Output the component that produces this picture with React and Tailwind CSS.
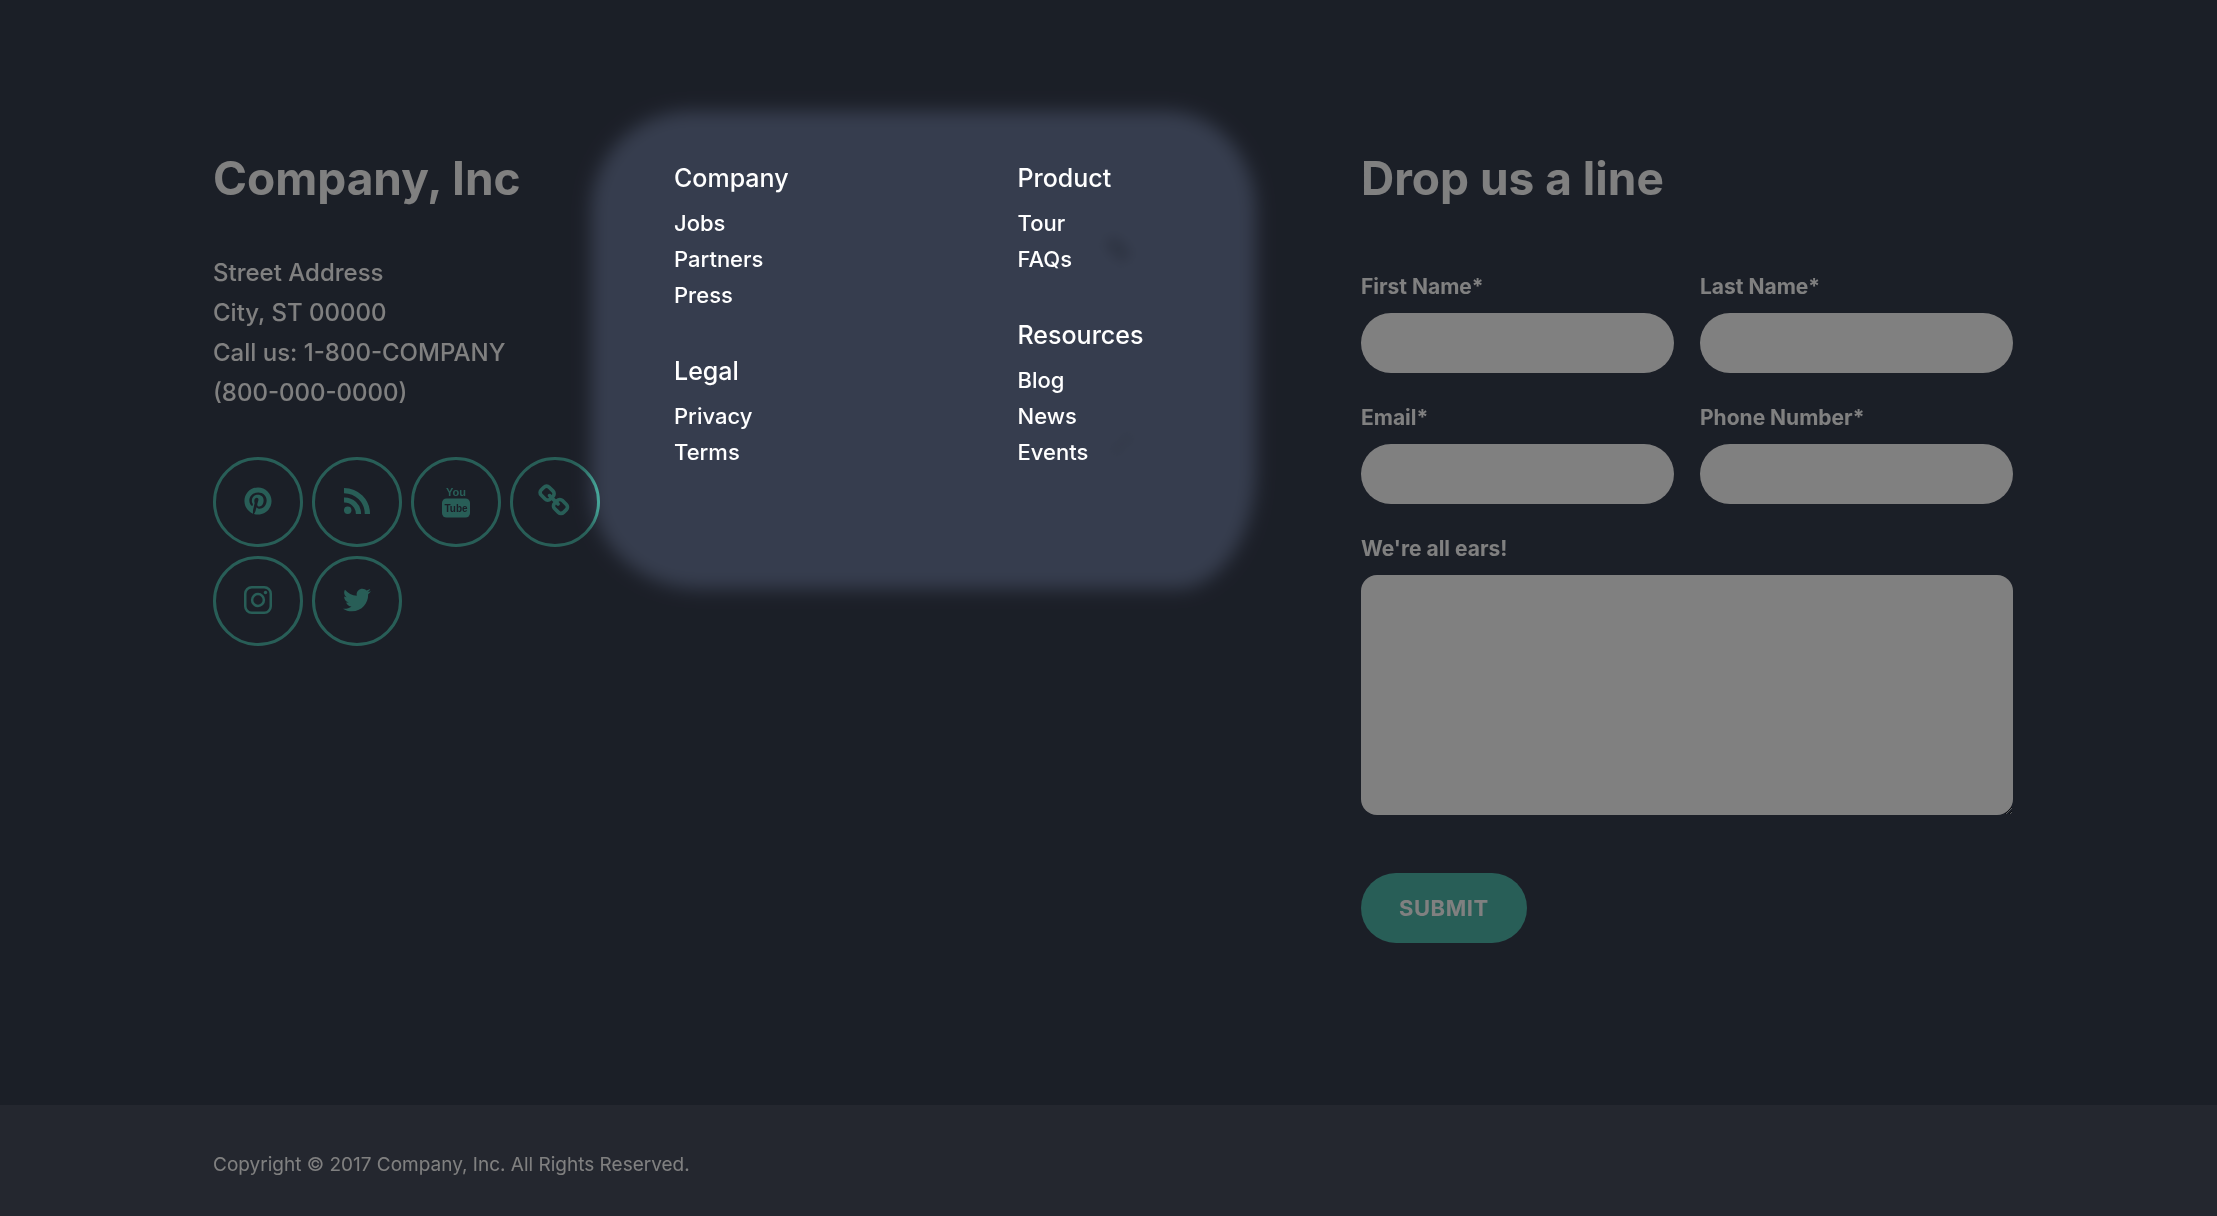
import React from 'react';
import { FaPinterest, FaTwitter } from 'react-icons/fa';

const linkColumns = [
  [
    { title: 'Company', links: ['Jobs', 'Partners', 'Press'] },
    { title: 'Legal', links: ['Privacy', 'Terms'] },
  ],
  [
    { title: 'Product', links: ['Tour', 'FAQs'] },
    { title: 'Resources', links: ['Blog', 'News', 'Events'] },
  ],
];

const fields = [
  { id: 'firstName', label: 'First Name*', type: 'text' },
  { id: 'lastName', label: 'Last Name*', type: 'text' },
  { id: 'email', label: 'Email*', type: 'email' },
  { id: 'phone', label: 'Phone Number*', type: 'tel' },
];

const RssIcon = () => (
  <svg viewBox="0 0 26 26" className="h-[26px] w-[26px]" fill="none" stroke="currentColor" strokeWidth="5.2">
    <circle cx="3.7" cy="22.3" r="3.7" fill="currentColor" stroke="none" />
    <path d="M0 12A14 14 0 0 1 14.5 26" />
    <path d="M0 2.6A23.4 23.4 0 0 1 23.4 26" />
  </svg>
);

const YoutubeIcon = () => (
  <svg viewBox="0 0 28 34" className="h-[34px] w-7 font-['Liberation_Sans',sans-serif] font-bold" fill="currentColor" textAnchor="middle">
    <text x="14" y="12" fontSize="11">You</text>
    <rect x="0" y="14.5" width="28" height="19" rx="4.5" />
    <text x="14" y="28" fontSize="10" className="fill-[#363d4e]">Tube</text>
  </svg>
);

const LinkIcon = () => (
  <svg viewBox="0 0 1792 1792" className="h-[34px] w-[34px]" fill="currentColor">
    <path d="M1456 1216q0-40-28-68l-208-208q-28-28-68-28-42 0-72 32 3 3 19 18.5t21.5 21.5 15 19 13 25.5 3.5 27.5q0 40-28 68t-68 28q-15 0-27.5-3.5t-25.5-13-19-15-21.5-21.5-18.5-19q-33 31-33 73 0 40 28 68l206 207q27 27 68 27 40 0 68-26l147-146q28-28 28-67zm-703-705q0-40-28-68l-206-207q-28-28-68-28-39 0-68 27l-147 146q-28 28-28 67 0 40 28 68l208 208q27 27 68 27 42 0 72-31-3-3-19-18.5t-21.5-21.5-15-19-13-25.5-3.5-27.5q0-40 28-68t68-28q15 0 27.5 3.5t25.5 13 19 15 21.5 21.5 18.5 19q33-31 33-73zm895 705q0 120-85 203l-147 146q-83 83-203 83-121 0-204-85l-206-207q-83-83-83-203 0-123 88-209l-88-88q-86 88-208 88-120 0-204-84l-208-208q-84-84-84-204t85-203l147-146q83-83 203-83 121 0 204 85l206 207q83 83 83 203 0 123-88 209l88 88q86-88 208-88 120 0 204 84l208 208q84 84 84 204z" />
  </svg>
);

const InstagramIcon = () => (
  <svg viewBox="0 0 28 28" className="h-7 w-7" fill="none" stroke="currentColor" strokeWidth="2.5">
    <rect x="1.25" y="1.25" width="25.5" height="25.5" rx="6.5" />
    <circle cx="14" cy="14" r="5.9" />
    <circle cx="21.5" cy="6.5" r="1.7" fill="currentColor" stroke="none" />
  </svg>
);

const socials = [
  { name: 'Pinterest', icon: <FaPinterest className="h-7 w-7" /> },
  { name: 'RSS', icon: <RssIcon /> },
  { name: 'YouTube', icon: <YoutubeIcon /> },
  { name: 'Website', icon: <LinkIcon /> },
  { name: 'Instagram', icon: <InstagramIcon /> },
  { name: 'Twitter', icon: <FaTwitter className="h-7 w-7" /> },
];

const Contact = () => (
  <div>
    <h2 className="text-[46px] leading-14 font-bold">Company, Inc</h2>
    <address className="mt-[47px] text-2xl leading-10 font-medium not-italic">
      Street Address
      <br />
      City, ST 00000
      <br />
      Call us: 1-800-COMPANY
      <br />
      (800-000-0000)
    </address>
    <ul className="mt-11 flex flex-wrap gap-[9px] text-[#50bcae]">
      {socials.map(({ name, icon }) => (
        <li key={name}>
          <a
            href="#"
            aria-label={name}
            className="flex h-[90px] w-[90px] items-center justify-center rounded-full border-3 border-[#50bcae] pb-0.5"
          >
            {icon}
          </a>
        </li>
      ))}
    </ul>
  </div>
);

const FooterNav = () => (
  <nav className="grid grid-cols-2 pt-[10px] leading-9 font-medium">
    {linkColumns.map((groups, i) => (
      <div key={i} className="flex flex-col gap-10">
        {groups.map(({ title, links }) => (
          <div key={title}>
            <h3 className="mb-[9px] text-[25px] leading-9">{title}</h3>
            <ul className="text-[22px] leading-9">
              {links.map((link) => (
                <li key={link}>
                  <a href="#">{link}</a>
                </li>
              ))}
            </ul>
          </div>
        ))}
      </div>
    ))}
  </nav>
);

const ContactForm = () => (
  <form onSubmit={(e) => e.preventDefault()}>
    <h2 className="text-[46px] leading-14 font-bold">Drop us a line</h2>
    <div className="mt-[67px] grid grid-cols-2 gap-x-[26px] gap-y-[31px] text-[21px] leading-7">
      {fields.map(({ id, label, type }) => (
        <div key={id}>
          <label htmlFor={id} className="mb-3 block font-bold">
            {label}
          </label>
          <input id={id} name={id} type={type} className="block h-[60px] w-full rounded-full bg-white px-6 text-gray-800" />
        </div>
      ))}
      <div className="col-span-2">
        <label htmlFor="message" className="mb-3 block font-bold">
          We're all ears!
        </label>
        <textarea id="message" name="message" className="block h-60 w-full rounded-2xl bg-white px-6 py-4 text-gray-800" />
      </div>
    </div>
    <button type="submit" className="mt-[58px] h-[70px] rounded-full bg-[#50bcae] px-[38px] text-[22px] font-bold tracking-wide">
      SUBMIT
    </button>
  </form>
);

// Multiplied over the page: grey dims, white leaves the links at full brightness
const Spotlight = () => (
  <div aria-hidden="true" className="pointer-events-none absolute inset-0 overflow-hidden bg-[#808080] mix-blend-multiply">
    <div className="relative mx-auto max-w-[1809px]">
      <div className="absolute top-[111px] left-[387px] h-[478px] w-[665px] bg-white blur-[9px] [border-radius:100px_90px_80px_110px/100px_100px_120px_100px]" />
      <div className="absolute top-[241px] left-[900px] h-4 w-7 rotate-45 rounded-full bg-[#dcdcdc] blur-[6px]" />
      <div className="absolute top-[440px] left-[904px] h-2 w-7 -rotate-45 rounded-full bg-[#f2f2f2] blur-[5px]" />
    </div>
  </div>
);

export default function App() {
  return (
    <footer className="relative isolate flex min-h-screen flex-col bg-[#363d4e] font-['Inter',sans-serif] text-white">
      <div className="mx-auto grid w-full max-w-[1809px] flex-1 grid-cols-[461fr_687fr_652fr] pt-[150px] pb-[161px] pl-[9px]">
        <Contact />
        <FooterNav />
        <ContactForm />
      </div>
      <div className="bg-[#484e5e]">
        <p className="mx-auto max-w-[1809px] pt-[46px] pb-[37px] pl-[9px] text-[19px] leading-7">
          Copyright © 2017 Company, Inc. All Rights Reserved.
        </p>
      </div>
      <Spotlight />
    </footer>
  );
}
